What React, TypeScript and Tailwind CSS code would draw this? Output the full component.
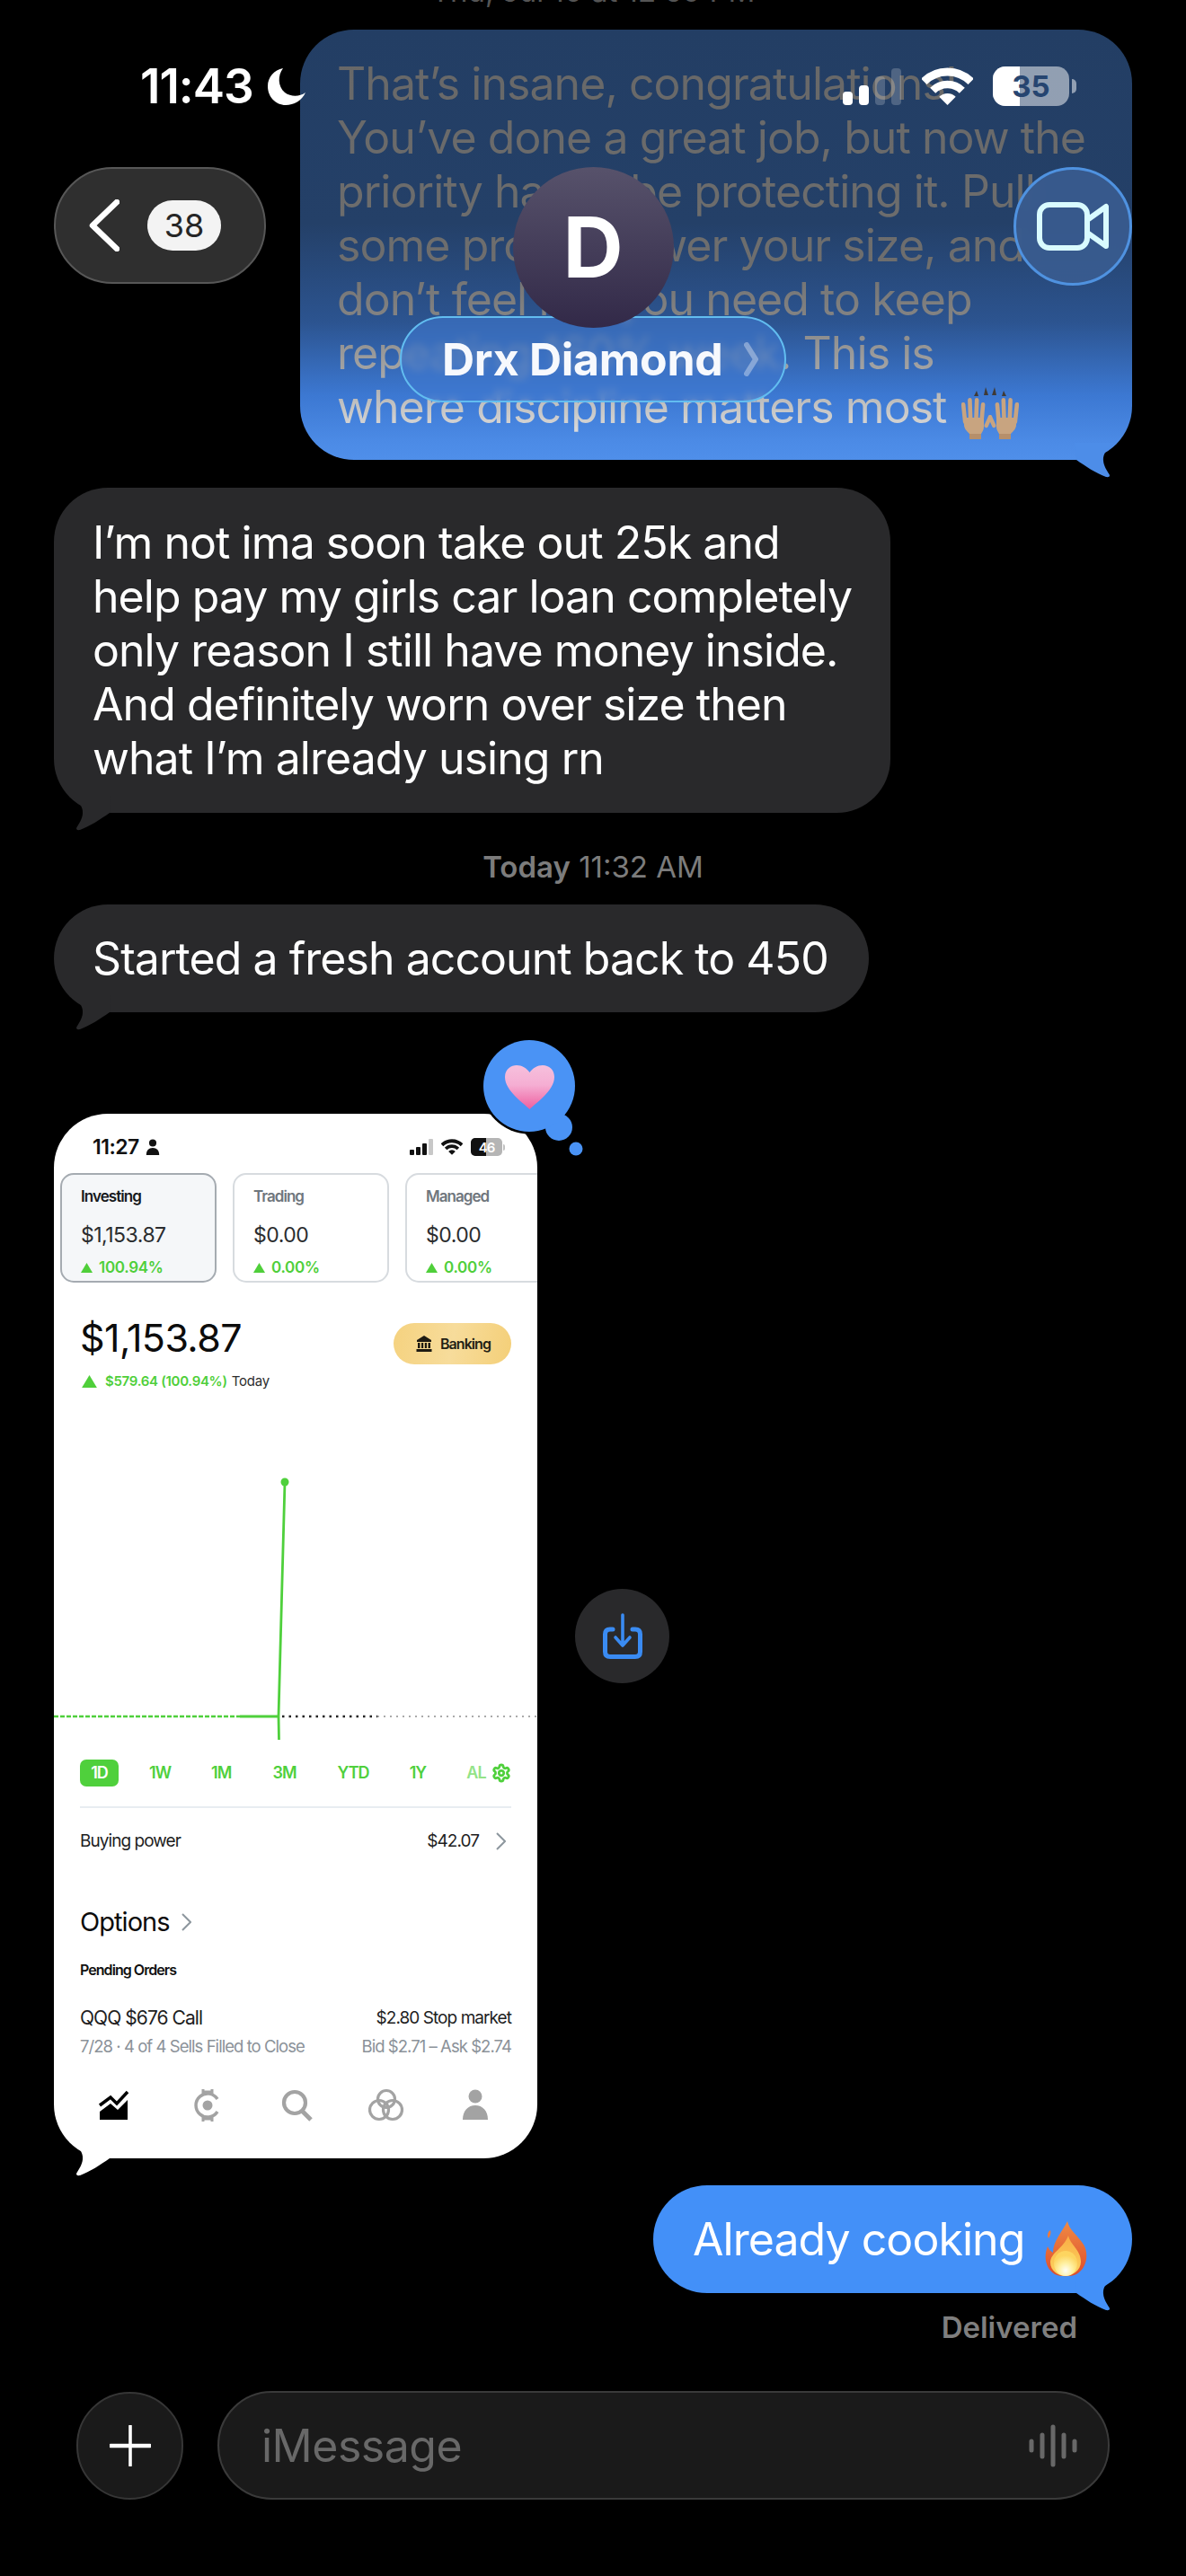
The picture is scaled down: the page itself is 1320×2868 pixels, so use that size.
import { Settings } from 'lucide-react';

function Tail({ side, className }: { side: 'left' | 'right'; className: string }) {
  return (
    <svg
      width="70"
      height="52"
      viewBox="0 0 70 52"
      className={`absolute bottom-[-21px] ${side === 'left' ? 'left-0' : 'right-0 -scale-x-100'} ${className}`}
    >
      <path d="M20 12C26 18 33 23 32 32C31.5 38 28 43 25.5 47C24 49.5 26 50.5 29 50C40 46 52 38 62 31L64 12Z" />
    </svg>
  );
}

function Wifi({ className, fill }: { className: string; fill: string }) {
  return (
    <svg viewBox="0 0 57 42" className={className} fill="none" stroke={fill}>
      <path d="M2.3 15.8A37 37 0 0 1 54.7 15.8" strokeWidth="9" />
      <path d="M12.2 25.7A23 23 0 0 1 44.8 25.7" strokeWidth="8.5" />
      <path d="M28.5 42L19.3 32.8A13 13 0 0 1 37.7 32.8Z" fill={fill} stroke="none" />
    </svg>
  );
}

function StatusBar() {
  return (
    <div className="flex h-[44px] items-center justify-between pl-[156px] pr-[122px]">
      <div className="flex items-center gap-[16px]">
        <span className="text-[53px] font-semibold leading-[44px] tracking-[-1px] text-white">11:43</span>
        <svg viewBox="0 0 42 41" className="h-[41px] w-[42px]" fill="white">
          <path d="M17 0C11 8 11 20 19 27C26 32 35 32 42 27C38 36 29 41 20 41C9 41 0 32 0 20C0 10 7 2 17 0Z" />
        </svg>
      </div>
      <div className="flex items-center gap-[23px]">
        <div className="flex h-[41px] items-end gap-[7px]">
          <div className="h-[15px] w-[11px] rounded-[4px] bg-white" />
          <div className="h-[22px] w-[11px] rounded-[4px] bg-white" />
          <div className="h-[32px] w-[11px] rounded-[4px] bg-white/20" />
          <div className="h-[41px] w-[11px] rounded-[4px] bg-white/20" />
        </div>
        <Wifi className="h-[42px] w-[57px]" fill="white" />
        <div className="ml-[-1px] flex items-center gap-[3px]">
          <div className="relative flex h-[44px] w-[85px] items-center justify-center overflow-hidden rounded-[14px] bg-white/50">
            <div className="absolute inset-y-0 left-0 w-[30px] bg-white" />
            <span className="relative text-[33px] font-bold leading-none text-[#264570]">35</span>
          </div>
          <div className="h-[16px] w-[5px] rounded-r-full bg-white/50" />
        </div>
      </div>
    </div>
  );
}

function Header() {
  return (
    <div className="absolute inset-x-0 top-[74px] z-20">
      <StatusBar />
      <div className="mt-[68px] grid grid-cols-[1fr_auto_1fr] items-start px-[60px]">
        <div className="flex h-[130px] w-[236px] items-center gap-[31px] rounded-full border-2 border-[#575757] bg-[#2f2f2f] pl-[37px]">
          <svg viewBox="0 0 34 58" className="h-[58px] w-[34px]" fill="none" stroke="white" strokeWidth="6.5" strokeLinecap="round" strokeLinejoin="round">
            <path d="M31 3L4 29L31 55" />
          </svg>
          <div className="flex h-[56px] w-[82px] items-center justify-center rounded-full bg-[#f3f3f3] text-[36px] leading-none text-[#262626]">38</div>
        </div>
        <div className="flex flex-col items-center">
          <div className="relative z-10 flex h-[179px] w-[179px] items-center justify-center rounded-full bg-[linear-gradient(to_bottom,#57526b,#322948)] text-[93px] font-bold leading-none text-white">
            D
          </div>
          <div className="mt-[-13px] flex h-[96px] w-[430px] items-center rounded-full border-2 border-[#62bdf0] bg-[#3f78cf]/60 pl-[45px] backdrop-blur-[4px]">
            <span className="text-[50px] font-bold leading-none tracking-[-0.3px] text-[#f7f9fd]">Drx Diamond</span>
            <svg viewBox="0 0 16 38" className="ml-[24px] h-[38px] w-[16px]" fill="none" stroke="white" strokeOpacity="0.35" strokeWidth="6" strokeLinecap="round" strokeLinejoin="round">
              <path d="M3 3L13 19L3 35" />
            </svg>
          </div>
        </div>
        <div className="flex h-[132px] w-[132px] items-center justify-center justify-self-end rounded-full border-[3px] border-[#4f92e0] bg-[#3a5c90]/90 backdrop-blur-md">
          <svg viewBox="0 0 80 54" className="h-[54px] w-[80px]" fill="none" stroke="#d9fbff" strokeWidth="6" strokeLinejoin="round">
            <rect x="3" y="3" width="53" height="48" rx="11" />
            <path d="M56 20L77 5V49L56 34" />
          </svg>
        </div>
      </div>
    </div>
  );
}

function RaisedHands() {
  const hand = (
    <g fill="#c8a480">
      <rect x="2" y="17" width="4.6" height="24" rx="2.3" transform="rotate(-6 4 40)" />
      <rect x="8" y="12" width="4.6" height="28" rx="2.3" transform="rotate(-2 10 40)" />
      <rect x="14" y="12" width="4.6" height="28" rx="2.3" transform="rotate(2 16 40)" />
      <rect x="20" y="17" width="4.6" height="24" rx="2.3" transform="rotate(5 22 40)" />
      <rect x="25" y="30" width="4.4" height="15" rx="2.2" transform="rotate(24 27 44)" />
      <path d="M3 34H25V44C25 48 23 50 22 52V58H9V52C6 49 3 46 3 42Z" />
      <path d="M9 52H22V58H9Z" fill="#b68f6b" />
    </g>
  );
  return (
    <svg viewBox="0 0 64 58" className="my-[-12px] ml-[16px] inline-block h-[58px] w-[64px] align-[-6px]">
      {hand}
      <g transform="translate(64 0) scale(-1 1)">{hand}</g>
      <path d="M14 10L17 4L19 10ZM25 9L27 0L30 9ZM34 9L37 0L39 9ZM45 10L47 4L50 10Z" fill="#3f3a36" />
    </svg>
  );
}

function Fire() {
  return (
    <svg viewBox="0 0 48 62" className="my-[-12px] ml-[22px] inline-block h-[62px] w-[48px] align-[-12px]">
      <defs>
        <linearGradient id="fireOuter" x1="0" y1="0" x2="0" y2="1">
          <stop offset="0" stopColor="#f08a44" />
          <stop offset="1" stopColor="#dd4d2c" />
        </linearGradient>
        <linearGradient id="fireMid" x1="0" y1="0" x2="0" y2="1">
          <stop offset="0" stopColor="#f9ad45" />
          <stop offset="1" stopColor="#fdd560" />
        </linearGradient>
        <radialGradient id="fireCore" cx="0.5" cy="0.78" r="0.6">
          <stop offset="0" stopColor="#fffef6" />
          <stop offset="0.5" stopColor="#fff0a0" />
          <stop offset="1" stopColor="#fdd560" />
        </radialGradient>
      </defs>
      <path fill="url(#fireOuter)" d="M26 0C28 10 38 16 44 26C50 36 48 52 36 59C30 62 18 62 12 59C2 53 -1 40 4 28C6 32 8 34 10 35C10 22 20 12 26 0Z" />
      <path fill="#ef7a3a" d="M7 10C8 13 7 16 5 19C3 16 4 12 7 10Z" />
      <path fill="url(#fireMid)" d="M27 16C29 26 41 32 41 45C41 55 31 61 24 61C16 61 7 55 7 46C7 35 22 30 27 16Z" />
      <ellipse cx="24" cy="47" rx="13" ry="14" fill="url(#fireCore)" />
    </svg>
  );
}

function Reaction() {
  return (
    <svg viewBox="0 0 185 145" className="absolute left-[470px] top-[-91px] z-10 h-[145px] w-[185px]">
      <defs>
        <linearGradient id="heartFill" x1="0" y1="0" x2="0" y2="1">
          <stop offset="0" stopColor="#f6c0dc" />
          <stop offset="0.45" stopColor="#f5aed3" />
          <stop offset="1" stopColor="#ee5f9f" />
        </linearGradient>
      </defs>
      <circle cx="92" cy="106" r="17" fill="black" />
      <circle cx="59" cy="60" r="53.5" fill="black" />
      <circle cx="92" cy="106" r="15" fill="#4a93f5" />
      <circle cx="59" cy="60" r="51" fill="#4a93f5" />
      <circle cx="111" cy="130" r="7.5" fill="#4a93f5" />
      <path
        fill="url(#heartFill)"
        d="M59.5 86C54 80 32 66 32 50C32 41 39 37 45 37C51 37 56 40 59.5 45C63 40 68 37 74 37C81 37 87 42 87 50C87 66 65 80 59.5 86Z"
      />
    </svg>
  );
}

function MiniStatus() {
  return (
    <div className="flex h-[24px] items-center justify-between pl-[43px] pr-[36px]">
      <div className="flex items-center gap-[7px]">
        <span className="text-[23px] font-semibold leading-[24px] tracking-[-0.5px] text-[#111]">11:27</span>
        <svg viewBox="0 0 16 20" className="h-[18px] w-[16px]" fill="#111">
          <circle cx="8" cy="5" r="4.5" />
          <path d="M0 20C0 14 3 11 8 11C13 11 16 14 16 20Z" />
        </svg>
      </div>
      <div className="flex items-center gap-[9px]">
        <div className="flex h-[18px] items-end gap-[2px]">
          <div className="h-[6px] w-[5px] rounded-[1px] bg-[#111]" />
          <div className="h-[9px] w-[5px] rounded-[1px] bg-[#111]" />
          <div className="h-[13px] w-[5px] rounded-[1px] bg-[#111]" />
          <div className="h-[18px] w-[5px] rounded-[1px] bg-[#c8c8c8]" />
        </div>
        <Wifi className="h-[18px] w-[24px]" fill="#111" />
        <div className="flex items-center gap-[1px]">
          <div className="relative flex h-[20px] w-[35px] items-center justify-center overflow-hidden rounded-[5px] bg-[#b5b5b5]">
            <div className="absolute inset-y-0 left-0 w-[17px] bg-[#111]" />
            <span className="relative text-[15px] font-semibold leading-none text-white">46</span>
          </div>
          <div className="h-[7px] w-[2px] rounded-r-full bg-[#c0c0c0]" />
        </div>
      </div>
    </div>
  );
}

function Up({ size }: { size: 'sm' | 'lg' }) {
  return (
    <svg viewBox="0 0 12 10" className={size === 'sm' ? 'h-[11px] w-[13px]' : 'h-[14px] w-[17px]'} fill="#4fcf3a">
      <path d="M6 0L12 10H0Z" />
    </svg>
  );
}

const accounts = [
  { name: 'Investing', value: '$1,153.87', pct: '100.94%', active: true },
  { name: 'Trading', value: '$0.00', pct: '0.00%', active: false },
  { name: 'Managed', value: '$0.00', pct: '0.00%', active: false },
];

function AccountCard({ name, value, pct, active }: { name: string; value: string; pct: string; active: boolean }) {
  return (
    <div
      className={`h-[122px] w-[174px] shrink-0 rounded-[15px] border-2 pl-[21px] pt-[12px] ${
        active ? 'border-[#a5abb1] bg-[#f5f7f9]' : 'border-[#d7dbdf] bg-white'
      }`}
    >
      <div className={`text-[17px] font-semibold leading-[24px] ${active ? 'text-[#16191c]' : 'text-[#6f767d]'}`}>{name}</div>
      <div className="mt-[16px] text-[23px] leading-[30px] tracking-[-0.5px] text-[#2a2c2e]">{value}</div>
      <div className="mt-[11px] flex h-[20px] items-center gap-[7px]">
        <Up size="sm" />
        <span className="text-[17px] font-semibold leading-[20px] tracking-[-0.3px] text-[#4fcf3a]">{pct}</span>
      </div>
    </div>
  );
}

function Chart() {
  return (
    <svg viewBox="0 0 538 305" className="mt-[91px] block h-[305px] w-[538px]" fill="none">
      <path d="M0 272H207" stroke="#4fd03c" strokeWidth="2.5" strokeDasharray="5 2" />
      <path d="M207 272H250" stroke="#4fd03c" strokeWidth="3" />
      <path d="M254 272H360" stroke="#222" strokeWidth="2.5" strokeDasharray="2.5 5" />
      <path d="M360 272H538" stroke="#aaa" strokeWidth="2" strokeDasharray="2 5" />
      <path d="M257 11L250 272L250.5 298" stroke="#4fd03c" strokeWidth="2.8" />
      <circle cx="257" cy="11" r="4.5" fill="#4fd03c" />
    </svg>
  );
}

function RangeRow() {
  return (
    <div className="mt-[15px] flex h-[30px] items-center justify-between pl-[29px] pr-[29px] text-[18px] font-semibold leading-none text-[#4fd03c]">
      <div className="flex items-center">
        <div className="flex h-[30px] w-[43px] items-center justify-center rounded-[7px] bg-[#4fd03c] text-white">1D</div>
        <span className="ml-[34px]">1W</span>
        <span className="ml-[45px]">1M</span>
        <span className="ml-[46px]">3M</span>
        <span className="ml-[46px]">YTD</span>
        <span className="ml-[45px]">1Y</span>
        <span className="ml-[45px] text-[#93e387]">AL</span>
      </div>
      <Settings className="h-[22px] w-[22px]" strokeWidth={3} />
    </div>
  );
}

function TabIcons() {
  return (
    <div className="mt-[34px] flex h-[40px] items-center justify-between pl-[47px] pr-[49px]">
      <svg viewBox="0 0 40 40" className="h-[40px] w-[40px]" fill="none">
        <path d="M4 20L16 11L23 18L35 5" stroke="black" strokeWidth="3.5" />
        <path d="M4 36V27L16 18L24 25L35 14V36Z" fill="black" />
      </svg>
      <svg viewBox="0 0 40 40" className="ml-[4px] h-[40px] w-[40px]" fill="none" stroke="#a3a3a3" strokeWidth="3.5">
        <path d="M31 13A13 13 0 1 0 31 27" />
        <circle cx="20" cy="20" r="5.5" fill="#a3a3a3" stroke="none" />
        <path d="M15 2V8M25 2V8M15 32V38M25 32V38M14 5H26M14 35H26" strokeWidth="3" />
      </svg>
      <svg viewBox="0 0 40 40" className="h-[40px] w-[40px]" fill="none" stroke="#a3a3a3" strokeWidth="4.2">
        <circle cx="18" cy="17" r="12" />
        <path d="M26 26L36 36" strokeWidth="5" />
      </svg>
      <svg viewBox="0 0 40 40" className="h-[40px] w-[40px]" fill="none" stroke="#a3a3a3" strokeWidth="3.2">
        <circle cx="20" cy="13" r="9.5" />
        <circle cx="12" cy="25" r="10.5" />
        <circle cx="27" cy="25" r="10.5" />
      </svg>
      <svg viewBox="0 0 40 40" className="h-[40px] w-[40px]" fill="#a3a3a3">
        <circle cx="20" cy="10" r="7.5" />
        <path d="M6 36C6 26 12 20 20 20C28 20 34 26 34 36Z" />
      </svg>
    </div>
  );
}

function Screenshot() {
  return (
    <div className="h-[1163px] w-[538px] overflow-hidden rounded-[60px] bg-white pt-[25px]">
      <MiniStatus />
      <div className="mt-[17px] flex gap-[18px] pl-[7px]">
        {accounts.map((a) => (
          <AccountCard key={a.name} {...a} />
        ))}
      </div>

      <div className="mt-[36px] flex items-start justify-between pl-[29px] pr-[29px]">
        <div className="text-[43px] leading-[50px] tracking-[-0.6px] text-[#0c0c0c]">$1,153.87</div>
        <div className="mt-[9px] flex h-[46px] w-[131px] items-center gap-[9px] rounded-full bg-[linear-gradient(100deg,#f5d27f,#f7dc9b_50%,#f4cf78)] pl-[25px]">
          <svg viewBox="0 0 18 18" className="h-[18px] w-[18px]" fill="#1d1a12">
            <path d="M9 0L17 5V7H1V5Z" />
            <path d="M2 8H4.5V14H2ZM6 8H8.2V14H6ZM9.8 8H12V14H9.8ZM13.5 8H16V14H13.5ZM0.5 15H17.5V18H0.5Z" />
          </svg>
          <span className="text-[16px] font-semibold leading-none text-[#231f15]">Banking</span>
        </div>
      </div>

      <div className="mt-[9px] flex h-[20px] items-center pl-[31px]">
        <Up size="lg" />
        <span className="ml-[9px] text-[15px] font-semibold leading-[20px] tracking-[-0.3px] text-[#4fcf3a]">$579.64 (100.94%)</span>
        <span className="ml-[5px] text-[15px] leading-[20px] tracking-[-0.2px] text-[#2d2d2d]">Today</span>
      </div>

      <Chart />
      <RangeRow />
      <div className="mx-[29px] mt-[22px] h-[2px] bg-[#e8edf1]" />

      <div className="mt-[25px] flex h-[24px] items-center justify-between pl-[29px] pr-[35px] text-[19px] leading-[24px] text-[#1e1e1e]">
        <span>Buying power</span>
        <div className="flex items-center gap-[19px]">
          <span>$42.07</span>
          <svg viewBox="0 0 11 20" className="h-[20px] w-[11px]" fill="none" stroke="#8d979e" strokeWidth="2">
            <path d="M1 1L10 10L1 19" />
          </svg>
        </div>
      </div>

      <div className="mt-[58px] flex h-[40px] items-center gap-[13px] pl-[29px]">
        <span className="text-[29px] leading-[40px] text-[#0c0c0c]">Options</span>
        <svg viewBox="0 0 11 20" className="h-[20px] w-[11px]" fill="none" stroke="#8d979e" strokeWidth="2">
          <path d="M1 1L10 10L1 19" />
        </svg>
      </div>

      <div className="mt-[23px] pl-[29px] text-[16px] font-semibold leading-[20px] text-[#111]">Pending Orders</div>

      <div className="mt-[31px] flex items-center justify-between px-[29px] text-[#1e1e1e]">
        <span className="text-[21px] leading-[26px]">QQQ $676 Call</span>
        <span className="text-[19px] leading-[26px]">$2.80 Stop market</span>
      </div>
      <div className="mt-[6px] flex items-center justify-between px-[29px] text-[18.5px] leading-[24px] text-[#8b9299]">
        <span>7/28 · 4 of 4 Sells Filled to Close</span>
        <span>Bid $2.71 – Ask $2.74</span>
      </div>

      <TabIcons />
    </div>
  );
}

function SaveButton() {
  return (
    <div className="flex h-[105px] w-[105px] items-center justify-center rounded-full bg-[#29292b]">
      <svg viewBox="0 0 44 52" className="h-[52px] w-[44px]" fill="none" stroke="#3a8bf2" strokeLinecap="round" strokeLinejoin="round">
        <path d="M11 18H8C4.5 18 2.5 20 2.5 23.5V43C2.5 46.5 4.5 48.5 8 48.5H36C39.5 48.5 41.5 46.5 41.5 43V23.5C41.5 20 39.5 18 36 18H33" strokeWidth="5" />
        <path d="M22 2V36M14 27L22 36L30 27" strokeWidth="3.6" />
      </svg>
    </div>
  );
}

function Composer() {
  return (
    <div className="mt-[51px] flex items-center gap-[38px] px-[85px]">
      <div className="flex h-[120px] w-[119px] shrink-0 items-center justify-center rounded-full border-2 border-[#363636] bg-[#1a1a1a]">
        <svg viewBox="0 0 46 46" className="h-[46px] w-[46px]" stroke="white" strokeLinecap="round">
          <path d="M23 1V45" strokeWidth="3.6" />
          <path d="M1 23H45" strokeWidth="4.4" />
        </svg>
      </div>
      <div className="flex h-[121px] flex-1 items-center justify-between rounded-full border-2 border-[#3a3a3a] bg-[#1a1a1a] pl-[47px] pr-[33px]">
        <span className="text-[50px] leading-[60px] tracking-[-0.5px] text-[#686868]">iMessage</span>
        <svg viewBox="0 0 55 48" className="h-[48px] w-[55px]" stroke="#686868" strokeWidth="5" strokeLinecap="round">
          <path d="M3 19V29M15 12V36M27 3V45M39 12V36M51 19V29" />
        </svg>
      </div>
    </div>
  );
}

export default function App() {
  return (
    <div className="relative h-[2868px] w-[1320px] overflow-hidden bg-black font-[Inter,sans-serif] text-white">
      <Header />

      <div className="flex flex-col px-[60px] text-[50px] leading-[60px] tracking-[-0.95px]">
        {/* timestamp cut by the top edge */}
        <div className="mt-[-30px] h-[40px] text-center text-[33px] leading-[40px] tracking-normal text-[#555555]">Thu, Jul 10 at 12:59 PM</div>

        <div className="relative mt-[23px] w-[926px] self-end rounded-[60px] bg-[linear-gradient(to_bottom,#233e64_0%,#244068_45%,#2c5490_68%,#3c78d2_85%,#4c8be6_96%,#4f8fea_100%)] pb-[29px] pl-[41px] pt-[30px]">
          <p className="whitespace-nowrap bg-[linear-gradient(to_bottom,#686868_0%,#6e6e6e_55%,#858585_70%,#a8a8a8_85%,#dcdcdc_100%)] bg-clip-text text-transparent">
            That’s insane, congratulations!
            <br />
            You’ve done a great job, but now the
            <br />
            priority has to be protecting it. Pull
            <br />
            some profits, lower your size, and
            <br />
            don’t feel like you need to keep
            <br />
            repeating 160% week. This is
            <br />
            where discipline matters most
            <RaisedHands />
          </p>
          <Tail side="right" className="fill-[#4d8de8]" />
        </div>

        <div className="relative mt-[31px] w-[931px] rounded-[60px] bg-[#29292b] py-[31px] pl-[43px]">
          <p className="whitespace-nowrap">
            I’m not ima soon take out 25k and
            <br />
            help pay my girls car loan completely
            <br />
            only reason I still have money inside.
            <br />
            And definitely worn over size then
            <br />
            what I’m already using rn
          </p>
          <Tail side="left" className="fill-[#29292b]" />
        </div>

        <div className="mt-[40px] h-[40px] text-center text-[33px] leading-[40px] tracking-normal text-[#7c7c7c]">
          <span className="font-semibold">Today</span> 11:32 AM
        </div>

        <div className="relative mt-[22px] w-[907px] rounded-[60px] bg-[#29292b] py-[30px] pl-[43px]">
          <p className="whitespace-nowrap">Started a fresh account back to 450</p>
          <Tail side="left" className="fill-[#29292b]" />
        </div>

        <div className="mt-[113px] flex items-center gap-[42px]">
          <div className="relative">
            <Reaction />
            <Screenshot />
            <Tail side="left" className="fill-white" />
          </div>
          <SaveButton />
        </div>

        <div className="relative mt-[30px] w-[533px] self-end rounded-[60px] bg-[#4390f8] py-[30px] pl-[44px]">
          <p className="whitespace-nowrap">
            Already cooking
            <Fire />
          </p>
          <Tail side="right" className="fill-[#4390f8]" />
        </div>

        <div className="mt-[18px] pr-[61px] text-right text-[33px] font-semibold leading-[40px] tracking-normal text-[#7f7f7f]">Delivered</div>
      </div>

      <Composer />
    </div>
  );
}
